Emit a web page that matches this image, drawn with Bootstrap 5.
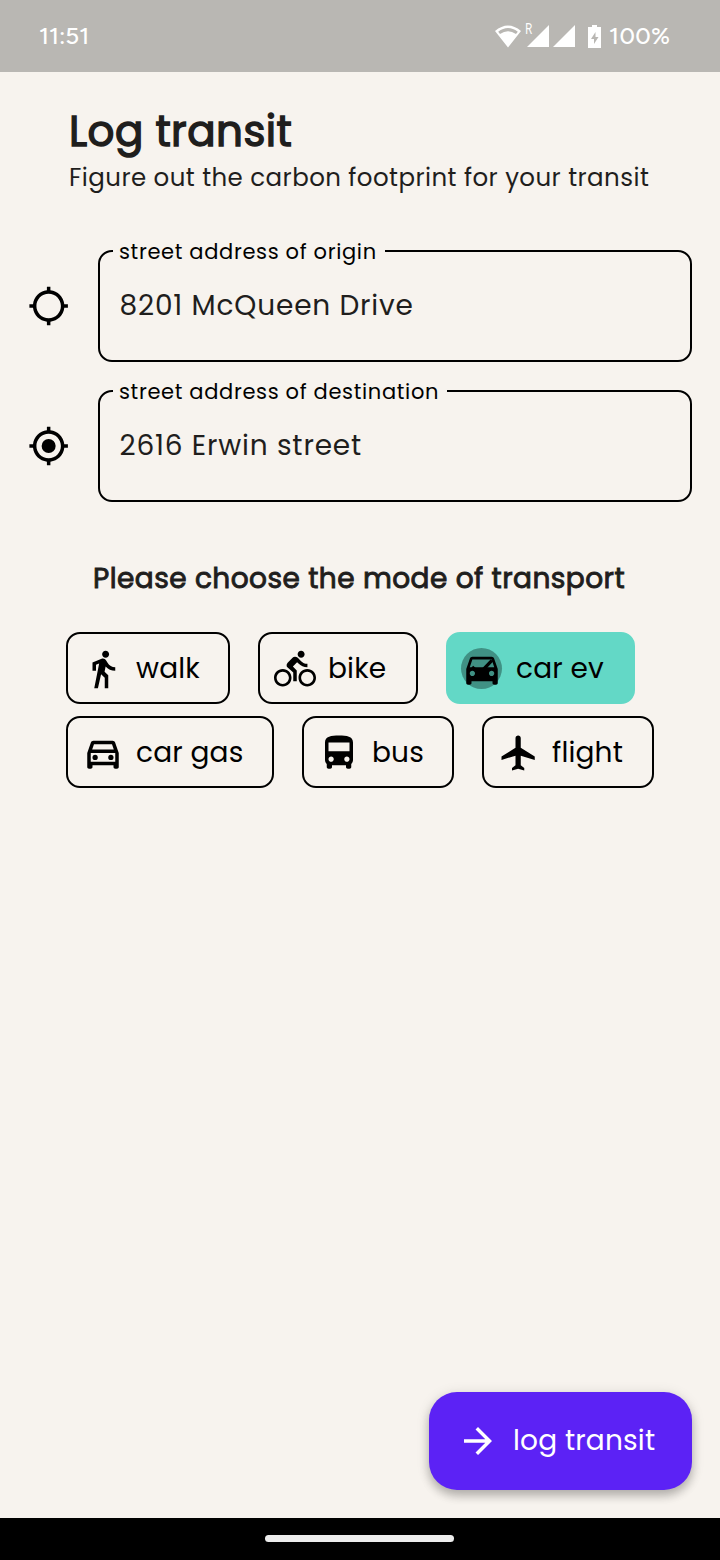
<!DOCTYPE html>
<html lang="en">
<head>
<meta charset="utf-8">
<meta name="viewport" content="width=device-width, initial-scale=1">
<title>Log transit</title>
<link href="https://cdn.jsdelivr.net/npm/bootstrap@5.3.0/dist/css/bootstrap.min.css" rel="stylesheet">
<style>
body { font-family: Poppins, Inter, "Open Sans", sans-serif; background: #f7f3ee; color: #1f1e1d; }
.screen { height: 1560px; }
.status-bar { height: 72px; background: #b9b7b3; padding: 0 50px 0 39px; color: #fff; font-family: Figtree, Inter, sans-serif; font-size: 24px; font-weight: 500; }
.status-percent { width: 61px; letter-spacing: .4px; }
.roaming { position: absolute; left: 0; top: -3px; font-size: 15px; line-height: 15px; font-weight: 400; transform: scaleX(.8); transform-origin: left; }
.page-head { padding: 34px 0 0 69px; }
.page-title { font-size: 42px; line-height: 52px; font-weight: 400; letter-spacing: .44px; -webkit-text-stroke: 1.4px currentColor; }
.page-sub { font-size: 24.5px; line-height: 42px; letter-spacing: .44px; margin-top: -1px !important; }
.address-list { padding: 51px 28px 0; gap: 28px; }
.address-row { gap: 28px; }
.outlined { height: 112px; border: 2px solid #000; border-radius: 14px; padding: 0 19.5px 0; }
.outlined-label { position: absolute; left: 13px; top: -17px; padding: 0 8px 0 6px; background: #f7f3ee; color: #000; font-size: 21px; line-height: 34px; letter-spacing: .66px; }
.outlined-value { font-size: 28px; letter-spacing: .84px; font-weight: 400; }
.mode-title { font-size: 28px; line-height: 40px; font-weight: 400; letter-spacing: .44px; -webkit-text-stroke: .9px currentColor; margin: 57px 0 0 93px; }
.modes { padding: 33px 0 0 66px; gap: 12px; }
.mode-row { gap: 28px; }
.mode-chip { height: 72px; border: 2px solid #000; border-radius: 14px; padding: 2px 0 0 14px; color: #000; font-size: 28px; line-height: 40px; letter-spacing: .17px; background: transparent; gap: 12px; }
.mode-chip.selected { background: #63d8c6; border-color: #63d8c6; }
.selected .chip-icon { left: -1px; }
.selected .chip-icon::before { content: ""; position: absolute; left: 0; top: 0; width: 41px; height: 41px; border-radius: 50%; background: #409184; }
.chip-icon { width: 42px; height: 42px; }
.w-walk { width: 164px; } .w-bike { width: 160px; } .w-ev { width: 189px; }
.w-gas { width: 208px; } .w-bus { width: 152px; } .w-flight { width: 172px; }
.fab { width: 263px; height: 98px; border: 0; border-radius: 28px; margin: 0 28px 28px 0; padding: 0 0 0 28px; gap: 14px; color: #fff; background: #5c22f5; font-size: 28px; letter-spacing: .17px; box-shadow: 0 6px 10px rgba(0,0,0,.22), 0 2px 14px rgba(0,0,0,.12); }
.gesture-bar { height: 42px; background: #000; padding-right: 1px; }
.gesture-pill { width: 189px; height: 7px; border-radius: 4px; background: #ededed; margin-top: -1px; }
svg { display: block; }
</style>
</head>
<body>
<div class="screen d-flex flex-column overflow-hidden">
  <header class="status-bar d-flex align-items-center justify-content-between">
    <span>11:51</span>
    <div class="d-flex align-items-center">
      <svg width="26" height="23" viewBox="0 0 26 23" fill="#fff"><path fill-rule="evenodd" d="M0 6Q13-5 26 6L13 22.500ZM3.200 6.800L5 9Q13 3.500 21 9L22.800 6.800Q13-.7 3.200 6.800Z"/></svg>
      <span class="position-relative ms-1 ps-1"><span class="roaming">R</span>
        <svg class="me-1" width="22" height="22" viewBox="0 0 22 22" fill="#fff" style="margin-left:-2px"><path d="M22 0V22H0Z"/></svg></span>
      <svg width="22" height="22" viewBox="0 0 22 22" fill="#fff"><path d="M22 0V22H0Z"/></svg>
      <svg style="margin:0 8px 0 13px" width="13" height="23" viewBox="0 0 13 23" fill="#fff"><path fill-rule="evenodd" d="M4 0h5v2h4v21H0V2h4ZM7.500 7L3 14h3v5l4.500-7H7.500Z"/></svg>
      <span class="status-percent">100%</span>
    </div>
  </header>

  <main class="flex-grow-1 d-flex flex-column">
    <div class="page-head">
      <h1 class="page-title m-0">Log transit</h1>
      <p class="page-sub m-0 text-nowrap">Figure out the carbon footprint for your transit</p>
    </div>

    <div class="address-list d-flex flex-column">
      <div class="address-row d-flex align-items-center">
        <svg class="flex-shrink-0" width="42" height="42" viewBox="0.200 0 24 24"><path d="M20.94 11c-.46-4.17-3.77-7.48-7.940-7.940V1h-2v2.060C6.830 3.520 3.520 6.830 3.060 11H1v2h2.060c.46 4.170 3.770 7.480 7.940 7.940V23h2v-2.060c4.170-.46 7.480-3.770 7.940-7.940H23v-2h-2.060zM12 19c-3.870 0-7-3.130-7-7s3.130-7 7-7 7 3.130 7 7-3.130 7-7 7z"/></svg>
        <div class="outlined position-relative flex-grow-1 d-flex align-items-center">
          <span class="outlined-label text-nowrap">street address of origin</span>
          <span class="outlined-value">8201 McQueen Drive</span>
        </div>
      </div>
      <div class="address-row d-flex align-items-center">
        <svg class="flex-shrink-0" width="42" height="42" viewBox="0.200 0 24 24"><path d="M20.94 11c-.46-4.17-3.77-7.48-7.940-7.940V1h-2v2.060C6.830 3.520 3.520 6.830 3.060 11H1v2h2.060c.46 4.170 3.770 7.480 7.940 7.940V23h2v-2.060c4.170-.46 7.480-3.770 7.940-7.940H23v-2h-2.060zM12 19c-3.870 0-7-3.130-7-7s3.130-7 7-7 7 3.130 7 7-3.130 7-7 7z"/><circle cx="12" cy="12" r="4"/></svg>
        <div class="outlined position-relative flex-grow-1 d-flex align-items-center">
          <span class="outlined-label text-nowrap">street address of destination</span>
          <span class="outlined-value">2616 Erwin street</span>
        </div>
      </div>
    </div>

    <h2 class="mode-title mb-0 text-nowrap">Please choose the mode of transport</h2>

    <div class="modes d-flex flex-column">
      <div class="mode-row d-flex">
        <button type="button" class="mode-chip w-walk d-flex align-items-center">
          <span class="chip-icon"><svg width="42" height="42" viewBox="0 0 24 24"><path d="M13.500 5.500c1.100 0 2-.9 2-2s-.9-2-2-2-2 .9-2 2 .9 2 2 2zM9.800 8.900L7 23h2.100l1.800-8 2.100 2v6h2v-7.500l-2.100-2 .6-3C14.800 12 16.800 13 19 13v-2c-1.900 0-3.500-1-4.300-2.400l-1-1.600c-.4-.6-1-1-1.700-1-.3 0-.5.1-.8.1L6 8.300V13h2V9.600l1.800-.7"/></svg></span>walk</button>
        <button type="button" class="mode-chip w-bike d-flex align-items-center">
          <span class="chip-icon"><svg width="42" height="42" viewBox="0 0 24 24"><path d="M15.500 5.500c1.100 0 2-.9 2-2s-.9-2-2-2-2 .9-2 2 .9 2 2 2zM5 12c-2.800 0-5 2.200-5 5s2.200 5 5 5 5-2.200 5-5-2.200-5-5-5zm0 8.500c-1.900 0-3.500-1.600-3.500-3.500s1.600-3.500 3.500-3.500 3.500 1.600 3.500 3.500-1.600 3.500-3.500 3.500zm5.800-10l2.400-2.400.8.8c1.300 1.300 3 2.100 5.100 2.100V9c-1.500 0-2.700-.6-3.600-1.500l-1.900-1.900c-.5-.4-1-.6-1.600-.6s-1.100.2-1.400.6L7.800 8.400c-.4.4-.6.9-.6 1.400 0 .6.2 1.100.6 1.400L11 14v5h2v-6.200l-2.200-2.300zM19 12c-2.800 0-5 2.200-5 5s2.200 5 5 5 5-2.200 5-5-2.200-5-5-5zm0 8.500c-1.900 0-3.500-1.600-3.500-3.500s1.600-3.500 3.500-3.500 3.500 1.600 3.500 3.500-1.600 3.500-3.500 3.500z"/></svg></span>bike</button>
        <button type="button" class="mode-chip selected w-ev d-flex align-items-center">
          <span class="chip-icon position-relative"><svg class="position-relative" width="42" height="42" viewBox="0 0 24 24"><path d="M18.920 6.010C18.720 5.420 18.160 5 17.500 5h-11c-.66 0-1.210.42-1.420 1.010L3 12v8c0 .55.45 1 1 1h1c.55 0 1-.45 1-1v-1h12v1c0 .55.45 1 1 1h1c.55 0 1-.45 1-1v-8l-2.080-5.990zM6.500 16c-.83 0-1.500-.67-1.500-1.500S5.670 13 6.500 13s1.500.67 1.500 1.500S7.330 16 6.500 16zm11 0c-.83 0-1.500-.67-1.500-1.500s.67-1.500 1.500-1.500 1.500.67 1.500 1.500-.67 1.500-1.500 1.500zM5 11l1.500-4.500h11L19 11H5z"/><path d="M6.300 10.800L10.600 14.500L17.700 7.100" fill="none" stroke="#000" stroke-width="1.900"/></svg></span>car ev</button>
      </div>
      <div class="mode-row d-flex">
        <button type="button" class="mode-chip w-gas d-flex align-items-center">
          <span class="chip-icon"><svg width="42" height="42" viewBox="0 0 24 24"><path d="M18.920 6.010C18.720 5.420 18.160 5 17.500 5h-11c-.66 0-1.210.42-1.420 1.010L3 12v8c0 .55.45 1 1 1h1c.55 0 1-.45 1-1v-1h12v1c0 .55.45 1 1 1h1c.55 0 1-.45 1-1v-8l-2.080-5.990zM6.850 7h10.290l1.040 3H5.810l1.040-3zM19 17H5v-5h14v5z"/><circle cx="7.500" cy="14.500" r="1.500"/><circle cx="16.500" cy="14.500" r="1.500"/></svg></span>car gas</button>
        <button type="button" class="mode-chip w-bus d-flex align-items-center">
          <span class="chip-icon"><svg width="42" height="42" viewBox="0 0 24 24"><path d="M4 16c0 .88.39 1.670 1 2.220V20c0 .55.45 1 1 1h1c.55 0 1-.45 1-1v-1h8v1c0 .55.45 1 1 1h1c.55 0 1-.45 1-1v-1.780c.61-.55 1-1.340 1-2.220V6c0-3.500-3.580-4-8-4s-8 .5-8 4v10zm3.500 1c-.83 0-1.500-.67-1.500-1.500S6.670 14 7.500 14s1.500.67 1.500 1.500S8.330 17 7.500 17zm9 0c-.83 0-1.500-.67-1.500-1.500s.67-1.500 1.500-1.500 1.500.67 1.500 1.500-.67 1.500-1.500 1.500zm1.500-6H6V6h12v5z"/></svg></span>bus</button>
        <button type="button" class="mode-chip w-flight d-flex align-items-center">
          <span class="chip-icon"><svg width="42" height="42" viewBox="0 0 24 24"><path d="M21 16v-2l-8-5V3.500c0-.83-.67-1.500-1.500-1.500S10 2.670 10 3.500V9l-8 5v2l8-2.500V19l-2 1.500V22l3.500-1 3.500 1v-1.500L13 19v-5.500l8 2.500z"/></svg></span>flight</button>
      </div>
    </div>

    <button type="button" class="fab d-flex align-items-center mt-auto align-self-end">
      <svg width="42" height="42" viewBox="0 0 24 24" fill="#fff"><path d="M12 4l-1.410 1.410L16.170 11H4v2h12.170l-5.580 5.590L12 20l8-8z"/></svg>log transit</button>
  </main>

  <footer class="gesture-bar d-flex align-items-center justify-content-center"><div class="gesture-pill"></div></footer>
</div>
<script src="https://cdn.jsdelivr.net/npm/bootstrap@5.3.0/dist/js/bootstrap.bundle.min.js"></script>
</body>
</html>
